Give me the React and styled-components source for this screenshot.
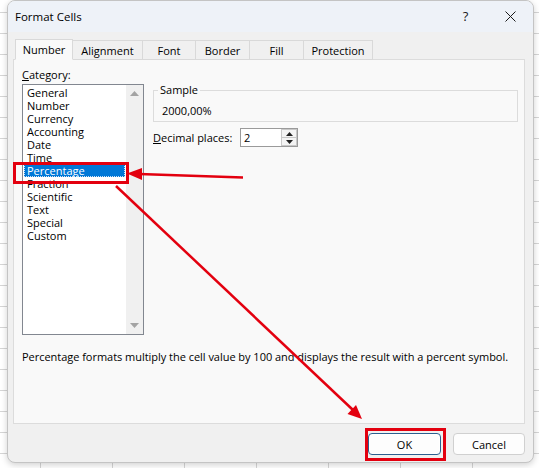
import React from "react";
import styled, { createGlobalStyle } from "styled-components";

const FONT = `"Open Sans", "Noto Sans", "Liberation Sans", sans-serif`;

const GlobalStyle = createGlobalStyle`
  html, body { margin: 0; padding: 0; }
  body { font-family: ${FONT}; background: #ffffff; color: #000; }
  * { box-sizing: border-box; }
`;

const Desktop = styled.div`
  position: relative;
  width: 539px;
  height: 468px;
  overflow: hidden;
  padding-left: 7px;
  background-color: #ffffff;
  background-image:
    linear-gradient(to right, #d5d5d5 1px, transparent 1px),
    linear-gradient(to bottom, #d5d5d5 1px, transparent 1px);
  background-size: 72px 21px;
  background-position: 40px 12px;
`;

const Dialog = styled.div`
  width: 527px;
  height: 463px;
  background: #f0f0f0;
  border: 1px solid #c4c4c4;
  border-radius: 8px;
  box-shadow: 0 2px 6px rgba(0, 0, 0, 0.18);
  display: flex;
  flex-direction: column;
  overflow: hidden;
  font-size: 11px;
`;

const TitleBar = styled.div`
  height: 31px;
  flex: none;
  display: flex;
  align-items: center;
  padding-left: 7px;
  padding-bottom: 1px;
  background: #eef2f8;
`;

const Title = styled.div`
  flex: 1;
  font-size: 11.5px;
  color: #000;
`;

const TitleButton = styled.div`
  width: 45px;
  height: 30px;
  display: flex;
  align-items: center;
  justify-content: center;
  font-size: 13px;
  color: #1a1a1a;
`;

const Body = styled.div`
  flex: 1;
  display: flex;
  flex-direction: column;
  padding: 7px 8px 0 5px;
`;

const TabStrip = styled.div`
  display: flex;
  align-items: flex-end;
  height: 21px;
  padding-left: 2px;
  margin-bottom: -1px;
  position: relative;
  z-index: 1;
`;

const Tab = styled.div`
  width: ${(p) => p.$w}px;
  height: ${(p) => (p.$active ? 21 : 20)}px;
  display: flex;
  align-items: center;
  justify-content: center;
  border: 1px solid #d9d9d9;
  border-left-width: ${(p) => (p.$first ? 1 : 0)}px;
  border-bottom-color: ${(p) => (p.$active ? "#f9f9f9" : "#d9d9d9")};
  background: ${(p) => (p.$active ? "#f9f9f9" : "#f0f0f0")};
  padding-bottom: ${(p) => (p.$active ? 1 : 0)}px;
`;

const Panel = styled.div`
  height: 365px;
  background: #f9f9f9;
  border: 1px solid #dcdcdc;
  padding: 7px 6px 0 8px;
  display: flex;
  flex-direction: column;
`;

const TopArea = styled.div`
  display: flex;
  gap: 9px;
`;

const LeftCol = styled.div`
  width: 122px;
  flex: none;
  display: flex;
  flex-direction: column;
`;

const FieldLabel = styled.div`
  height: 17px;
  line-height: 16px;
`;

const ListBox = styled.div`
  width: 122px;
  height: 251px;
  border: 1px solid #828790;
  background: #ffffff;
  display: flex;
`;

const ListItems = styled.ul`
  flex: 1;
  margin: 0;
  padding: 1px 0 0;
  list-style: none;
`;

const Item = styled.li`
  margin: 0 1px;
  padding-left: 3px;
  height: 13px;
  line-height: 13px;
  white-space: nowrap;
  background: ${(p) => (p.$selected ? "#0078d7" : "transparent")};
  color: ${(p) => (p.$selected ? "#ffffff" : "#000000")};
  outline: ${(p) => (p.$selected ? "1px dotted #cfe4f7" : "none")};
  outline-offset: -1px;
`;

const ScrollBar = styled.div`
  width: 17px;
  flex: none;
  background: #f0f0f0;
  display: flex;
  flex-direction: column;
  justify-content: space-between;
`;

const ScrollButton = styled.div`
  height: 17px;
  display: flex;
  align-items: center;
  justify-content: center;
`;

const RightCol = styled.div`
  flex: 1;
  display: flex;
  flex-direction: column;
`;

const Group = styled.div`
  position: relative;
  margin-top: 23px;
  border: 1px solid #dcdcdc;
  padding: 13px 8px 3px;
  line-height: 14px;
`;

const Legend = styled.span`
  position: absolute;
  top: -8px;
  left: 4px;
  padding: 0 2px;
  line-height: 14px;
  background: #f9f9f9;
`;

const DecimalRow = styled.div`
  display: flex;
  align-items: center;
  margin-top: 6px;
`;

const RowLabel = styled.div`
  width: 87px;
`;

const SpinBox = styled.div`
  width: 58px;
  height: 19px;
  border: 1px solid #9a9a9a;
  background: #ffffff;
  display: flex;
  align-items: center;
`;

const SpinValue = styled.div`
  flex: 1;
  padding-left: 3px;
  line-height: 17px;
`;

const SpinButtons = styled.div`
  width: 16px;
  height: 17px;
  display: flex;
  flex-direction: column;
`;

const SpinButton = styled.div`
  flex: 1;
  display: flex;
  align-items: center;
  justify-content: center;
  border: 1px solid #c8c8c8;
  border-top-width: ${(p) => (p.$down ? 0 : 1)}px;
  background: #f4f4f4;
`;

const Description = styled.div`
  margin-top: 15px;
  line-height: 14px;
  white-space: nowrap;
  letter-spacing: -0.03px;
`;

const Footer = styled.div`
  display: flex;
  justify-content: flex-end;
  gap: 12px;
  padding: 9px 0 0 0;
`;

const Button = styled.div`
  width: ${(p) => p.$w}px;
  height: 22px;
  display: flex;
  align-items: center;
  justify-content: center;
  border-radius: 4px;
  background: #fdfdfd;
  border: 1px solid ${(p) => (p.$primary ? "#2c5f8f" : "#d0d0d0")};
  box-shadow: ${(p) => (p.$primary ? "inset 0 0 0 1px #ffffff" : "none")};
`;

const Overlay = styled.svg`
  position: absolute;
  left: 0;
  top: 0;
  pointer-events: none;
`;

const Triangle = ({ up, color = "#a3a3a3", w = 9, h = 5 }) => (
  <svg width={w} height={h} viewBox={`0 0 ${w} ${h}`}>
    {up ? (
      <polygon points={`0,${h} ${w},${h} ${w / 2},0`} fill={color} />
    ) : (
      <polygon points={`0,0 ${w},0 ${w / 2},${h}`} fill={color} />
    )}
  </svg>
);

const tabs = [
  ["Number", 58],
  ["Alignment", 70],
  ["Font", 53],
  ["Border", 54],
  ["Fill", 54],
  ["Protection", 69],
];

const categories = [
  "General",
  "Number",
  "Currency",
  "Accounting",
  "Date",
  "Time",
  "Percentage",
  "Fraction",
  "Scientific",
  "Text",
  "Special",
  "Custom",
];

const RED = "#e3000f";

export default function App() {
  return (
    <>
      <GlobalStyle />
      <Desktop>
        <Dialog>
          <TitleBar>
            <Title>Format Cells</Title>
            <TitleButton>?</TitleButton>
            <TitleButton>
              <svg width="11" height="11" viewBox="0 0 11 11">
                <path d="M0.5 0.5 L10.5 10.5 M10.5 0.5 L0.5 10.5" stroke="#1a1a1a" strokeWidth="1" />
              </svg>
            </TitleButton>
          </TitleBar>
          <Body>
            <TabStrip>
              {tabs.map(([name, w], i) => (
                <Tab key={name} $w={w} $active={i === 0} $first={i === 0}>
                  {name}
                </Tab>
              ))}
            </TabStrip>
            <Panel>
              <TopArea>
                <LeftCol>
                  <FieldLabel>
                    <u>C</u>ategory:
                  </FieldLabel>
                  <ListBox>
                    <ListItems>
                      {categories.map((c) => (
                        <Item key={c} $selected={c === "Percentage"}>
                          {c}
                        </Item>
                      ))}
                    </ListItems>
                    <ScrollBar>
                      <ScrollButton>
                        <Triangle up />
                      </ScrollButton>
                      <ScrollButton>
                        <Triangle />
                      </ScrollButton>
                    </ScrollBar>
                  </ListBox>
                </LeftCol>
                <RightCol>
                  <Group>
                    <Legend>Sample</Legend>
                    2000,00%
                  </Group>
                  <DecimalRow>
                    <RowLabel>
                      <u>D</u>ecimal places:
                    </RowLabel>
                    <SpinBox>
                      <SpinValue>2</SpinValue>
                      <SpinButtons>
                        <SpinButton>
                          <Triangle up color="#222" w={7} h={4} />
                        </SpinButton>
                        <SpinButton $down>
                          <Triangle color="#222" w={7} h={4} />
                        </SpinButton>
                      </SpinButtons>
                    </SpinBox>
                  </DecimalRow>
                </RightCol>
              </TopArea>
              <Description>
                Percentage formats multiply the cell value by 100 and displays the result with a percent symbol.
              </Description>
            </Panel>
            <Footer>
              <Button $w={73} $primary>
                OK
              </Button>
              <Button $w={72}>Cancel</Button>
            </Footer>
          </Body>
        </Dialog>
        <Overlay width="539" height="468" viewBox="0 0 539 468">
          <rect x="14.5" y="163.5" width="113" height="19" fill="none" stroke={RED} strokeWidth="3" />
          <line x1="243" y1="177.5" x2="139" y2="174" stroke={RED} strokeWidth="2.5" />
          <polygon points="127,173.5 142,168 142,180" fill={RED} />
          <line x1="116" y1="186" x2="353" y2="410" stroke={RED} strokeWidth="2.5" />
          <polygon points="362,419 347.5,414 356,405" fill={RED} />
          <rect x="366.5" y="429.5" width="78" height="30" fill="none" stroke={RED} strokeWidth="3" />
        </Overlay>
      </Desktop>
    </>
  );
}
